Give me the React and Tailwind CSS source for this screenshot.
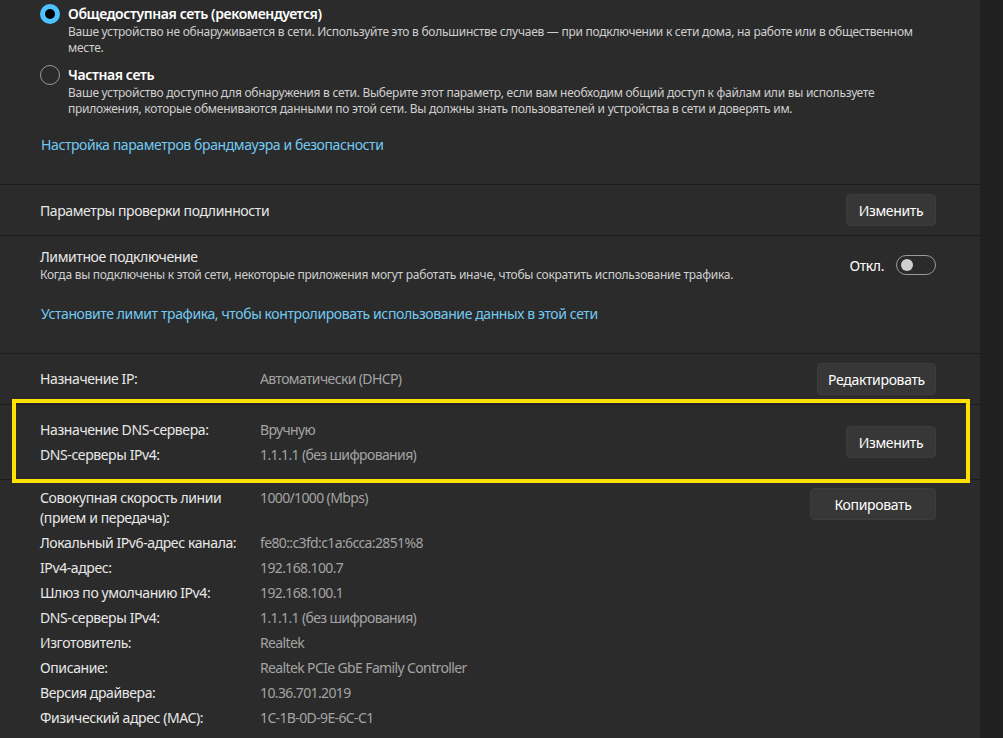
import React from "react";

const font = { fontFamily: '"Segoe UI", "Noto Sans", "Open Sans", sans-serif' };

function Btn({ children, w }) {
  return (
    <button className={`h-[32px] ${w} rounded-[4px] bg-[#373737] border border-[#3c3c3c] text-[14px] text-[#ffffff] flex items-center justify-center tracking-[-0.025em]`}>
      {children}
    </button>
  );
}

function Divider() {
  return <div className="h-[1px] bg-[#1d1d1d] w-full" />;
}

function Row({ label, value }) {
  return (
    <div className="flex text-[14px] leading-[20px]">
      <div className="w-[220px] text-[#e8e8e8]">{label}</div>
      <div className="text-[#a3a3a3] tracking-[-0.045em]">{value}</div>
    </div>
  );
}

export default function App() {
  return (
    <div className="w-[1003px] h-[738px] bg-[#202020] flex overflow-hidden relative tracking-[-0.025em]" style={font}>
      <div className="w-[980px] h-full bg-[#2b2b2b] flex flex-col shrink-0">
        {/* Section 1 */}
        <div className="pt-[4px] pb-[29px] pl-[40px]">
          <div className="flex gap-[8px]">
            <div className="w-[20px] h-[20px] rounded-full bg-[#4cc2ff] flex items-center justify-center shrink-0">
              <div className="w-[10px] h-[10px] rounded-full bg-[#000000]" />
            </div>
            <div className="flex flex-col">
              <div className="text-[14px] leading-[20px] font-semibold text-[#ffffff]">Общедоступная сеть (рекомендуется)</div>
              <div className="text-[12px] leading-[16px] text-[#cfcfcf] whitespace-nowrap tracking-[-0.022em]">
                Ваше устройство не обнаруживается в сети. Используйте это в большинстве случаев — при подключении к сети дома, на работе или в общественном
                <br />
                месте.
              </div>
            </div>
          </div>
          <div className="flex gap-[8px] mt-[9px]">
            <div className="w-[20px] h-[20px] rounded-full border border-[#9a9a9a] shrink-0" />
            <div className="flex flex-col">
              <div className="text-[14px] leading-[20px] font-semibold text-[#ffffff]">Частная сеть</div>
              <div className="text-[12px] leading-[16px] text-[#cfcfcf] whitespace-nowrap tracking-[-0.022em]">
                Ваше устройство доступно для обнаружения в сети. Выберите этот параметр, если вам необходим общий доступ к файлам или вы используете
                <br />
                приложения, которые обмениваются данными по этой сети. Вы должны знать пользователей и устройства в сети и доверять им.
              </div>
            </div>
          </div>
          <div className="mt-[18px] text-[14px] leading-[20px] text-[#72caf2] pl-[1px]">
            Настройка параметров брандмауэра и безопасности
          </div>
        </div>
        <Divider />
        {/* Section 2 */}
        <div className="h-[50px] flex items-center justify-between pl-[40px] pr-[44px]">
          <div className="text-[14px] text-[#e8e8e8]">Параметры проверки подлинности</div>
          <Btn w="w-[90px]">Изменить</Btn>
        </div>
        <Divider />
        {/* Section 3 */}
        <div className="pt-[11px] pb-[29px] pl-[40px] pr-[44px]">
          <div className="flex items-center justify-between">
            <div className="flex flex-col">
              <div className="text-[14px] leading-[20px] text-[#e8e8e8]">Лимитное подключение</div>
              <div className="text-[12px] leading-[16px] text-[#cfcfcf] tracking-[-0.022em]">
                Когда вы подключены к этой сети, некоторые приложения могут работать иначе, чтобы сократить использование трафика.
              </div>
            </div>
            <div className="flex items-center gap-[12px]">
              <span className="text-[14px] text-[#ffffff]">Откл.</span>
              <div className="w-[40px] h-[20px] rounded-full border border-[#9a9a9a] flex items-center px-[4px]">
                <div className="w-[12px] h-[12px] rounded-full bg-[#d0d0d0]" />
              </div>
            </div>
          </div>
          <div className="mt-[21px] text-[14px] leading-[20px] text-[#72caf2] pl-[1px]">
            Установите лимит трафика, чтобы контролировать использование данных в этой сети
          </div>
        </div>
        <Divider />
        {/* Section 4 */}
        <div className="h-[50px] flex items-center justify-between pl-[40px] pr-[44px]">
          <Row label="Назначение IP:" value="Автоматически (DHCP)" />
          <Btn w="w-[119px]">Редактировать</Btn>
        </div>
        <Divider />
        {/* Section 5 */}
        <div className="h-[74px] flex items-center justify-between pl-[40px] pr-[44px]">
          <div className="flex flex-col gap-[5px]">
            <Row label="Назначение DNS-сервера:" value="Вручную" />
            <Row label="DNS-серверы IPv4:" value="1.1.1.1 (без шифрования)" />
          </div>
          <Btn w="w-[90px]">Изменить</Btn>
        </div>
        <Divider />
        {/* Section 6 */}
        <div className="pt-[8px] pl-[40px] pr-[44px] flex justify-between">
          <div className="flex flex-col gap-[5px]">
            <div className="flex text-[14px] leading-[20px]">
              <div className="w-[220px] text-[#e8e8e8]">Совокупная скорость линии<br />(прием и передача):</div>
              <div className="text-[#a3a3a3] tracking-[-0.045em]">1000/1000 (Mbps)</div>
            </div>
            <Row label="Локальный IPv6-адрес канала:" value="fe80::c3fd:c1a:6cca:2851%8" />
            <Row label="IPv4-адрес:" value="192.168.100.7" />
            <Row label="Шлюз по умолчанию IPv4:" value="192.168.100.1" />
            <Row label="DNS-серверы IPv4:" value="1.1.1.1 (без шифрования)" />
            <Row label="Изготовитель:" value="Realtek" />
            <Row label="Описание:" value="Realtek PCIe GbE Family Controller" />
            <Row label="Версия драйвера:" value="10.36.701.2019" />
            <Row label="Физический адрес (MAC):" value="1C-1B-0D-9E-6C-C1" />
          </div>
          <Btn w="w-[126px]">Копировать</Btn>
        </div>
      </div>
      {/* Yellow highlight annotation */}
      <div className="absolute left-[12px] top-[399px] w-[958px] h-[84px] border-[4px] border-[#ffe000] pointer-events-none" />
    </div>
  );
}
